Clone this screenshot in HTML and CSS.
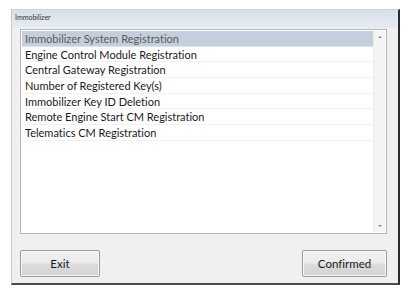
FILE: index.html
```html
<!DOCTYPE html>
<html>
<head>
<meta charset="utf-8">
<link rel="stylesheet" href="styles.css">
</head>
<body>
<div class="window">
  <div class="titlebar">Immobilizer</div>
  <div class="content">
    <div class="listbox">
      <ul class="items">
        <li class="item selected">Immobilizer System Registration</li>
        <li class="item">Engine Control Module Registration</li>
        <li class="item">Central Gateway Registration</li>
        <li class="item">Number of Registered Key(s)</li>
        <li class="item">Immobilizer Key ID Deletion</li>
        <li class="item">Remote Engine Start CM Registration</li>
        <li class="item">Telematics CM Registration</li>
      </ul>
      <div class="scrollbar">
        <span class="arrow up"></span>
        <span class="arrow down"></span>
      </div>
    </div>
    <div class="buttons">
      <button class="btn exit">Exit</button>
      <button class="btn confirm">Confirmed</button>
    </div>
  </div>
</div>
</body>
</html>
```
FILE: styles.css
```css
* { box-sizing: border-box; }
html, body {
  margin: 0;
  padding: 0;
  background: #ffffff;
}
body {
  width: 410px;
  height: 294px;
  overflow: hidden;
  font-family: Lato, "Open Sans", sans-serif;
  font-variant-ligatures: none;
}
.window {
  margin: 9px 0 0 11px;
  width: 389px;
  height: 276px;
  background: #f0f0f0;
  border-left: 1px solid #c9c9c9;
  border-top: 1px solid #d0d4d8;
  border-right: 2px solid #2b2b2b;
  border-bottom: 2px solid #4a4a4a;
  display: flex;
  flex-direction: column;
}
.titlebar {
  height: 18px;
  flex: none;
  background: linear-gradient(#d9e0e8, #e4ebf3);
  font-size: 7px;
  line-height: 15px;
  color: #333;
  padding-left: 3px;
  border-bottom: 1px solid #e8eef5;
}
.content {
  flex: 1;
  display: flex;
  flex-direction: column;
  padding: 1px 11px 6px 8px;
}
.listbox {
  height: 205px;
  flex: none;
  background: #fff;
  border: 1px solid #b5b5b5;
  display: flex;
  padding: 1px;
}
.items {
  list-style: none;
  margin: 0;
  padding: 0;
  flex: 1;
}
.item {
  height: 15.67px;
  line-height: 15px;
  font-size: 11px;
  color: #1a1a1a;
  padding-left: 3px;
  border-bottom: 1px solid #f1f1f1;
  white-space: nowrap;
}
.item.selected {
  background: #c4cfdd;
  color: #5a5a5a;
  border-bottom-color: #dde3ea;
}
.scrollbar {
  width: 12px;
  flex: none;
  background: #f4f4f4;
  border-left: 1px solid #ececec;
  display: flex;
  flex-direction: column;
  justify-content: space-between;
  align-items: center;
  padding: 5px 0;
}
.arrow {
  width: 0;
  height: 0;
  border-left: 2px solid transparent;
  border-right: 2px solid transparent;
}
.arrow.up { border-bottom: 2px solid #8a8a8a; }
.arrow.down { border-top: 2px solid #8a8a8a; }
.buttons {
  margin-top: 16px;
  display: flex;
  justify-content: space-between;
}
.btn {
  height: 27px;
  font-family: Lato, "Open Sans", sans-serif;
  font-variant-ligatures: none;
  font-size: 11.5px;
  color: #1a1a1a;
  border: 1px solid #9a9a9a;
  border-radius: 2px;
  background: linear-gradient(#f2f2f2 0%, #ebebeb 45%, #dcdcdc 55%, #d2d2d2 100%);
  box-shadow: inset 0 0 0 1px #fbfbfb;
  padding: 0;
}
.btn.exit { width: 80px; }
.btn.confirm { width: 85px; }
```
